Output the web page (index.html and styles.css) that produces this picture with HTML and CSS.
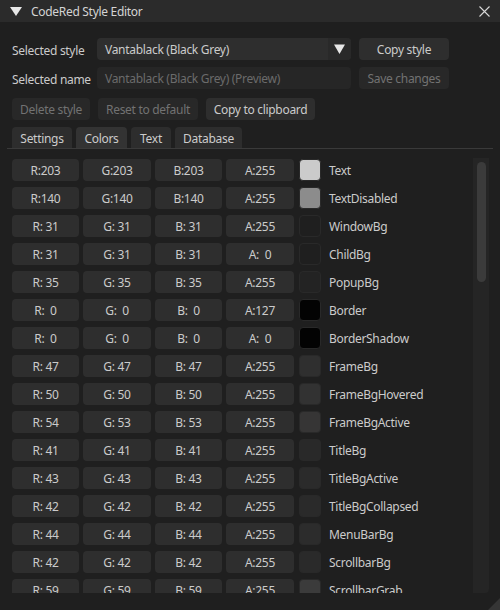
FILE: index.html
```html
<!DOCTYPE html>
<html>
<head>
<meta charset="utf-8">
<link rel="stylesheet" href="styles.css">
</head>
<body>
<div class="window">
  <div class="titlebar">
    <svg class="collapse" width="12" height="10" viewBox="0 0 12 10"><polygon points="0,1 12,1 6,10" fill="#e6e6e6"/></svg>
    <span class="title">CodeRed Style Editor</span>
    <svg class="close" width="11" height="11" viewBox="0 0 11 11"><path d="M0.5 0.5 L10.5 10.5 M10.5 0.5 L0.5 10.5" stroke="#d8d8d8" stroke-width="1.1"/></svg>
  </div>
  <div class="content">
    <div class="row row1">
      <span class="label">Selected style</span>
      <div class="combo"><span class="combo-text">Vantablack (Black Grey)</span><span class="combo-arrow"><svg width="11" height="10" viewBox="0 0 11 10"><polygon points="0,0.5 11,0.5 5.5,10" fill="#e6e6e6"/></svg></span></div>
      <div class="btn side">Copy style</div>
    </div>
    <div class="row row2">
      <span class="label">Selected name</span>
      <div class="input">Vantablack (Black Grey) (Preview)</div>
      <div class="btn side disabled">Save changes</div>
    </div>
    <div class="row row3">
      <div class="btn disabled w-del">Delete style</div>
      <div class="btn disabled w-reset">Reset to default</div>
      <div class="btn w-copy">Copy to clipboard</div>
    </div>
    <div class="tabs">
      <div class="tab w-settings">Settings</div>
      <div class="tab active w-colors">Colors</div>
      <div class="tab w-text">Text</div>
      <div class="tab w-db">Database</div>
    </div>
    <div class="child">
      <div class="list" id="list"></div>
      <div class="scrollbar"><div class="grab"></div></div>
    </div>
  </div>
  <div class="grip"></div>
</div>
<script src="app.js"></script>
</body>
</html>
```
FILE: app.js
```js
var rows = [
  ["Text",203,203,203,255],
  ["TextDisabled",140,140,140,255],
  ["WindowBg",31,31,31,255],
  ["ChildBg",31,31,31,0],
  ["PopupBg",35,35,35,255],
  ["Border",0,0,0,127],
  ["BorderShadow",0,0,0,0],
  ["FrameBg",47,47,47,255],
  ["FrameBgHovered",50,50,50,255],
  ["FrameBgActive",54,53,53,255],
  ["TitleBg",41,41,41,255],
  ["TitleBgActive",43,43,43,255],
  ["TitleBgCollapsed",42,42,42,255],
  ["MenuBarBg",44,44,44,255],
  ["ScrollbarBg",42,42,42,255],
  ["ScrollbarGrab",59,59,59,255]
];
function pad(n){ var s = String(n); while (s.length < 3) s = " " + s; return s; }
var list = document.getElementById("list");
rows.forEach(function(r){
  var row = document.createElement("div");
  row.className = "crow";
  var letters = ["R","G","B","A"];
  for (var i = 0; i < 4; i++) {
    var b = document.createElement("div");
    b.className = "cbtn c" + letters[i];
    b.textContent = letters[i] + ":" + pad(r[i+1]);
    row.appendChild(b);
  }
  var sw = document.createElement("div");
  sw.className = "swatch";
  var c = r[1] === 0 && r[2] === 0 ? 3 : 0;
  sw.style.background = "rgb(" + (r[1]+c) + "," + (r[2]+c) + "," + (r[3]+c) + ")";
  row.appendChild(sw);
  var l = document.createElement("span");
  l.className = "clabel";
  l.textContent = r[0];
  row.appendChild(l);
  list.appendChild(row);
});
```
FILE: styles.css
```css
html, body {
  margin: 0;
  padding: 0;
  background: #1f1f1f;
}
body {
  font-family: "Noto Sans", "Open Sans", sans-serif;
  font-size: 12px;
  letter-spacing: -0.3px;
  color: #cbcbcb;
}
.window {
  position: relative;
  width: 500px;
  height: 610px;
  background: #1f1f1f;
  overflow: hidden;
}
.titlebar {
  height: 22px;
  background: #2b2b2b;
  display: flex;
  align-items: center;
  padding: 0 10px 0 10px;
}
.collapse { margin-right: 9px; margin-top: -1px; }
.title {
  flex: 1;
  color: #d4d4d4;
  box-sizing: border-box;
  height: 22px;
  padding-top: 2px;
  line-height: 20px;
}
.content {
  padding: 16px 0 0 12px;
}
.row {
  display: flex;
  align-items: center;
  height: 22px;
  gap: 8px;
}
.row2 { margin-top: 7px; }
.row3 { margin-top: 9px; }
.label {
  width: 77px;
  white-space: nowrap;
  box-sizing: border-box;
  height: 22px;
  padding-top: 3px;
  line-height: 20px;
}
.combo {
  width: 254px;
  height: 22px;
  background: #2e2e2e;
  border-radius: 4px;
  display: flex;
  align-items: center;
  overflow: hidden;
}
.combo-text {
  flex: 1;
  padding-left: 8px;
  box-sizing: border-box;
  height: 22px;
  padding-top: 2px;
  line-height: 20px;
}
.combo-arrow {
  width: 23px;
  height: 22px;
  background: #292929;
  display: flex;
  align-items: center;
  justify-content: center;
}
.input {
  width: 254px;
  box-sizing: border-box;
  height: 22px;
  padding-top: 2px;
  line-height: 20px;
  background: #262626;
  border-radius: 4px;
  padding-left: 8px;
  color: #6b6b6b;
  white-space: nowrap;
}
.btn {
  box-sizing: border-box;
  height: 22px;
  padding-top: 2px;
  line-height: 20px;
  background: #2e2e2e;
  border-radius: 4px;
  text-align: center;
  white-space: nowrap;
  color: #cbcbcb;
}
.btn.disabled {
  background: #282828;
  color: #727272;
}
.side { width: 90px; }
.w-del { width: 78px; }
.w-reset { width: 100px; }
.w-copy { width: 109px; }
.tabs {
  margin-top: 7px;
  margin-left: -5px;
  margin-right: 7px;
  padding-left: 5px;
  display: flex;
  gap: 4px;
  height: 21px;
  border-bottom: 1px solid #3a3a3a;
}
.tab {
  box-sizing: border-box;
  height: 21px;
  padding-top: 2px;
  line-height: 19px;
  background: #2d2d2d;
  border-radius: 4px 4px 0 0;
  text-align: center;
  color: #cbcbcb;
}
.tab.active { background: #333333; }
.w-settings { width: 60px; }
.w-colors { width: 51px; }
.w-text { width: 40px; }
.w-db { width: 67px; }
.child {
  margin-top: 9px;
  width: 477px;
  height: 435px;
  display: flex;
  overflow: hidden;
}
.list {
  flex: 1;
  padding-top: 1px;
  display: flex;
  flex-direction: column;
  gap: 6px;
  overflow: hidden;
}
.crow {
  display: flex;
  align-items: center;
  height: 22px;
  flex: none;
}
.cbtn {
  box-sizing: border-box;
  height: 22px;
  padding-top: 2px;
  line-height: 20px;
  background: #2e2e2e;
  border-radius: 4px;
  text-align: center;
  white-space: pre;
  margin-right: 4px;
  color: #cbcbcb;
}
.cR { width: 67px; }
.cG { width: 68px; }
.cB { width: 67px; }
.cA { width: 68px; margin-right: 5px; }
.swatch {
  width: 20px;
  height: 20px;
  border: 1px solid #292929;
  border-radius: 4px;
  margin-right: 8px;
}
.clabel {
  white-space: nowrap;
  box-sizing: border-box;
  height: 22px;
  padding-top: 2px;
  line-height: 20px;
}
.scrollbar {
  width: 16px;
  height: 435px;
  background: #252525;
  border-radius: 0 0 4px 0;
  box-sizing: border-box;
  padding: 4px 3px;
}
.grab {
  width: 9px;
  height: 120px;
  margin: 0 auto;
  background: #3b3b3b;
  border-radius: 5px;
}
.grip {
  position: absolute;
  right: 0;
  bottom: 0;
  width: 0;
  height: 0;
  border-style: solid;
  border-width: 0 0 12px 12px;
  border-color: transparent transparent #353535 transparent;
}
```
